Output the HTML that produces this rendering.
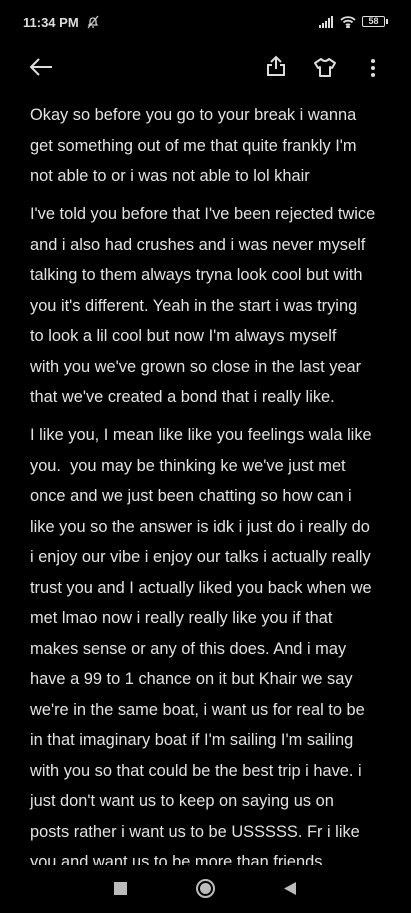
<!DOCTYPE html>
<html><head><meta charset="utf-8"><style>
html,body{margin:0;padding:0;background:#000;width:411px;height:913px;overflow:hidden;font-family:"Liberation Sans",sans-serif;}
.status{position:absolute;top:0;left:0;width:411px;height:45px;color:#ddd;}
.time{position:absolute;left:23px;top:15px;font-size:13px;font-weight:bold;}
.content{position:absolute;left:30px;top:100px;width:381px;color:#e2e2e2;font-size:16.4px;line-height:30.5px;}
.content p{margin:0 0 7.5px 0;white-space:nowrap;}
.nav{position:absolute;left:0;top:865px;width:411px;height:48px;background:#000;}
</style></head><body>
<div class="status">
<div class="time">11:34 PM</div>
<svg style="position:absolute;left:86px;top:15px" width="14" height="14" viewBox="0 0 14 14" fill="none" stroke="#ccc" stroke-width="1.3"><path d="M3 10 L4 8.5 V6 a3 3 0 0 1 6 0 V8.5 L11 10 Z M6 12 h2 M2 13 L12 1"/></svg>
<svg style="position:absolute;left:318px;top:16px" width="16" height="12" viewBox="0 0 16 12" fill="#ddd"><rect x="1" y="9" width="2" height="3"/><rect x="4" y="7" width="2" height="5"/><rect x="7" y="5" width="2" height="7"/><rect x="10" y="2" width="2" height="10"/><rect x="13" y="0" width="2" height="12"/></svg>
<svg style="position:absolute;left:340px;top:15px" width="16" height="13" viewBox="0 0 16 13" fill="none" stroke="#ddd" stroke-width="1.8"><path d="M1 5 a10 10 0 0 1 14 0 M3.5 7.5 a6.5 6.5 0 0 1 9 0 M6 10 a3 3 0 0 1 4 0"/><circle cx="8" cy="12" r="1" fill="#ddd"/></svg>
<div style="position:absolute;left:362px;top:16px;width:23px;height:11px;border:1.3px solid #ddd;border-radius:2px;box-sizing:border-box;font-size:9px;line-height:9px;text-align:center;color:#ddd;font-weight:bold">58</div>
<div style="position:absolute;left:386px;top:19px;width:2px;height:5px;background:#ddd"></div>
</div>
<svg style="position:absolute;left:29px;top:57px" width="24" height="20" viewBox="0 0 24 20" fill="none" stroke="#ddd" stroke-width="2"><path d="M2 10 H23 M10 2 L2 10 L10 18"/></svg>
<svg style="position:absolute;left:266px;top:55px" width="20" height="22" viewBox="0 0 20 22" fill="none" stroke="#ddd" stroke-width="2"><path d="M10 14 V2 M5 7 L10 2 L15 7 M6 10 H2 V20 H18 V10 H14"/></svg>
<svg style="position:absolute;left:313px;top:57px" width="24" height="20" viewBox="0 0 24 20" fill="none" stroke="#ddd" stroke-width="2" stroke-linejoin="round"><path d="M8 2 Q12 6 16 2 L22 6 L19 11 L17 10 V19 H7 V10 L5 11 L2 6 Z"/></svg>
<svg style="position:absolute;left:370px;top:58px" width="6" height="20" viewBox="0 0 6 20" fill="#ddd"><circle cx="3" cy="3" r="2"/><circle cx="3" cy="10" r="2"/><circle cx="3" cy="17" r="2"/></svg>
<div class="content">
<p>Okay so before you go to your break i wanna<br>get something out of me that quite frankly I'm<br>not able to or i was not able to lol khair</p>
<p>I've told you before that I've been rejected twice<br>and i also had crushes and i was never myself<br>talking to them always tryna look cool but with<br>you it's different. Yeah in the start i was trying<br>to look a lil cool but now I'm always myself<br>with you we've grown so close in the last year<br>that we've created a bond that i really like.</p>
<p>I like you, I mean like like you feelings wala like<br>you.&nbsp; you may be thinking ke we've just met<br>once and we just been chatting so how can i<br>like you so the answer is idk i just do i really do<br>i enjoy our vibe i enjoy our talks i actually really<br>trust you and I actually liked you back when we<br>met lmao now i really really like you if that<br>makes sense or any of this does. And i may<br>have a 99 to 1 chance on it but Khair we say<br>we're in the same boat, i want us for real to be<br>in that imaginary boat if I'm sailing I'm sailing<br>with you so that could be the best trip i have. i<br>just don't want us to keep on saying us on<br>posts rather i want us to be USSSSS. Fr i like<br>you and want us to be more than friends.</p>
</div>
<div class="nav">
<div style="position:absolute;left:114px;top:17px;width:13px;height:13px;background:#bbb"></div>
<div style="position:absolute;left:196px;top:14px;width:15px;height:15px;border:2px solid #bbb;border-radius:50%;"></div>
<div style="position:absolute;left:200px;top:18px;width:11px;height:11px;background:#bbb;border-radius:50%;"></div>
<svg style="position:absolute;left:283px;top:16px" width="14" height="15" viewBox="0 0 14 15"><path d="M13 1 L1 7.5 L13 14 Z" fill="#bbb"/></svg>
</div>
</body></html>
